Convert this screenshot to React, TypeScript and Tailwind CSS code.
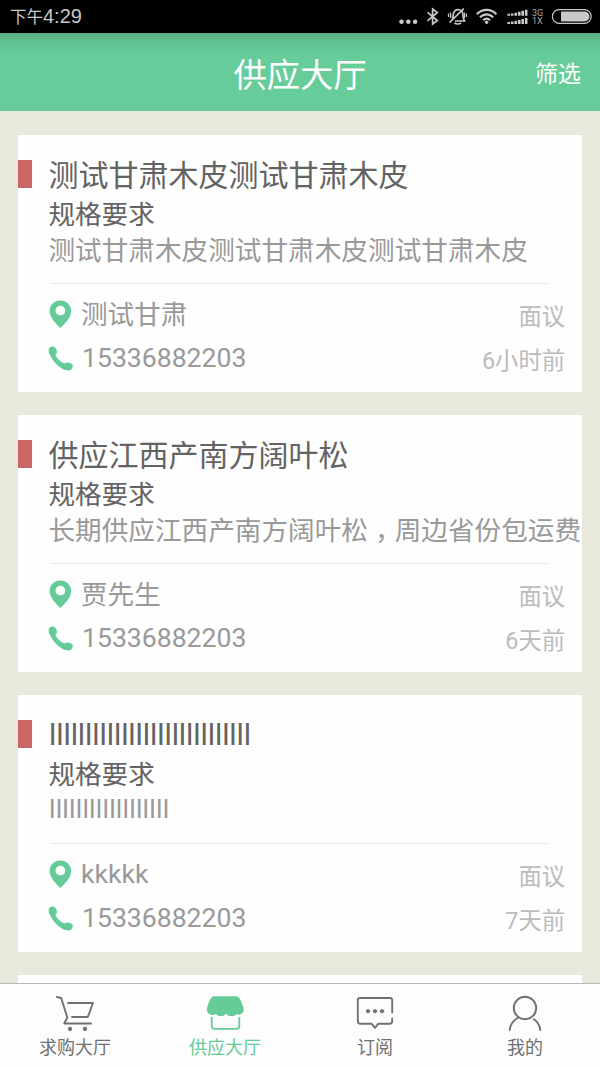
import React from "react";

type Listing = { title: string; desc: string; name: string; phone: string; time: string };

const listings: Listing[] = [
  { title: "测试甘肃木皮测试甘肃木皮", desc: "测试甘肃木皮测试甘肃木皮测试甘肃木皮", name: "测试甘肃", phone: "15336882203", time: "6小时前" },
  { title: "供应江西产南方阔叶松", desc: "长期供应江西产南方阔叶松，周边省份包运费", name: "贾先生", phone: "15336882203", time: "6天前" },
  { title: "llllllllllllllllllllllllllll", desc: "llllllllllllllllll", name: "kkkkk", phone: "15336882203", time: "7天前" },
];

const isLatin = (text: string) => /^[\x20-\x7e]+$/.test(text);

function StatusBar() {
  return (
    <div className="flex h-[33px] shrink-0 items-center justify-between bg-black pl-[10px] pr-[8px] text-[#c8c8c8]">
      <span className="flex items-center leading-[33px]">
        <span className="pt-px text-[16.5px]">下午</span>
        <span className="font-['Liberation_Sans',sans-serif] text-[20px]">4:29</span>
      </span>
      <svg width="194" height="33" viewBox="398 0 194 33" fill="none" stroke="#c8c8c8">
        <g fill="#c8c8c8" stroke="none">
          <circle cx="401.5" cy="21.7" r="2.3" />
          <circle cx="408.3" cy="21.7" r="2.3" />
          <circle cx="415.1" cy="21.7" r="2.3" />
        </g>
        <path d="M427.5 12.3 L437.3 20.5 L432.6 24 V9 L437.3 12.5 L427.5 20.8" strokeWidth="1.7" />
        <path d="M452.2 20.3 C453.3 18.5 452.6 12.5 455 10.8 C457.5 8.6 461.3 9.7 462.4 12.3 C463.2 14.5 462.6 18 464.5 21 H455 M454.5 22.8 C456 24.4 459.5 24.4 461 22.8 M449.5 22.5 L463.8 8.7" strokeWidth="1.7" />
        <path d="M450.6 12.5 V18 M448.5 13.5 V17 M464.4 12.5 V18 M466.4 13.5 V17" strokeWidth="1.3" />
        <g strokeWidth="2.2">
          <path d="M476.8 14.2 C482.3 8.4 491 8.4 496.4 14.2" />
          <path d="M480 17.3 C483.8 13.5 489.4 13.5 493.2 17.3" />
          <path d="M483.2 20.2 C485.3 18.2 488 18.2 490 20.2" />
        </g>
        <circle cx="486.6" cy="22.3" r="1.7" fill="#c8c8c8" stroke="none" />
        <g strokeWidth="2.6">
          <path d="M508.7 13.8 v2 M512.2 13.4 v2.4 M515.7 12.7 v3.1 M519.2 11.8 v4 M522.7 10.8 v5 M526.2 9.7 v6.1" />
          <path d="M508.7 22 v2 M512.2 21.5 v2.5 M515.7 20.8 v3.2 M519.2 20 v4 M522.7 19 v5 M526.2 17.9 v6.1" />
        </g>
        <g fill="#a8a8a8" stroke="none" fontFamily="Roboto, sans-serif" fontSize="9">
          <text x="532" y="15.8">3G</text>
          <text x="532" y="24.2">1X</text>
        </g>
        <rect x="552.4" y="9.7" width="38.8" height="13.6" rx="6.8" strokeWidth="1.2" />
        <path d="M561 11.5 h23.5 a5 5 0 0 1 0 10 h-23.5z" fill="#c8c8c8" stroke="none" />
      </svg>
    </div>
  );
}

function PinIcon() {
  return (
    <svg className="mb-0.5 ml-[-1px] shrink-0" width="24" height="28" viewBox="0 0 24 28">
      <path fillRule="evenodd" fill="#65cb97" d="M12.4 0.5 C6.2 0.5 1.7 5 1.7 11 C1.7 17.5 6.9 22.5 12.4 28 C17.9 22.5 23.1 17.5 23.1 11 C23.1 5 18.6 0.5 12.4 0.5Z M12.4 5.7 a4.9 4.9 0 1 1 0 9.8 a4.9 4.9 0 1 1 0-9.8Z" />
    </svg>
  );
}

function PhoneIcon() {
  return (
    <svg className="ml-[-1px] shrink-0" width="25" height="25" viewBox="0 0 25 25">
      <path fill="#65cb97" d="M1 2.5 C2.2 0.4 5.3 0 6.7 1.2 C8 2.5 9.3 4.7 9 6.5 C8.8 7.6 7.4 8.1 7.6 9 C8.4 12 12.5 15.7 16 17.1 C17.2 17.5 17.5 16.5 19 16.4 C21 16.2 24 17.5 24.7 18.9 C25.3 20.6 24 23.5 21.9 24.2 C18 25.3 12.5 22.2 8.5 18.2 C4.5 14.2 -0.8 6.2 1 2.5Z" />
    </svg>
  );
}

function Description({ text }: { text: string }) {
  const parts = text.split("，");
  return (
    <p className={`h-9 text-[26.6px] leading-8 text-[#999999] ${isLatin(text) ? "pl-[0.6px] pt-[2px] tracking-[0.22px]" : "pt-1 tracking-[0.04px]"}`}>
      {parts.map((part, i) => (
        <React.Fragment key={part}>
          {i > 0 && <span className="ml-[7px] mr-[6.3px] [font-feature-settings:'halt']">，</span>}
          {part}
        </React.Fragment>
      ))}
    </p>
  );
}

function Card({ item }: { item: Listing }) {
  return (
    <article className="h-[257px] shrink-0 overflow-hidden whitespace-nowrap bg-[#fefefe] pt-[22px]">
      <div className="flex h-9 items-start">
        <div className="mt-[3px] h-7 w-[14px] bg-[#cc6666]" />
        <h2 className={`text-[30px] leading-9 text-[#636363] ${isLatin(item.title) ? "pl-[17px] tracking-[-0.08px]" : "pl-[16.4px] pt-px"}`}>{item.title}</h2>
      </div>
      <div className="pl-[30.4px]">
        <p className="pt-[6px] text-[26.6px] leading-8 text-[#636363]">规格要求</p>
        <Description text={item.desc} />
      </div>
      <div className="ml-[33px] mr-[34px] mt-[16px] h-px bg-[#e8e8e8]" />
      <div className="flex h-[44px] items-center justify-between pl-[31px] pr-[17px] pt-[17px]">
        <div className="flex items-center gap-[9px] text-[26.6px] leading-8 text-[#999999]">
          <PinIcon />
          <span className={isLatin(item.name) ? "pb-[2px]" : ""}>{item.name}</span>
        </div>
        <span className="pt-[5px] text-[23.3px] leading-8 text-[#bbbbbb]">面议</span>
      </div>
      <div className="flex h-[44px] items-center justify-between pl-[31px] pr-[17px] pt-[17px]">
        <div className="flex items-center gap-[9px] text-[26.6px] leading-8 text-[#999999]">
          <PhoneIcon />
          <span className="pb-[2px]">{item.phone}</span>
        </div>
        <span className="pt-[5px] text-[23.3px] leading-8 text-[#bbbbbb]">{item.time}</span>
      </div>
    </article>
  );
}

const tabs = [
  {
    label: "求购大厅",
    color: "text-[#707070]",
    icon: (
      <g strokeWidth="1.9" strokeLinecap="round" strokeLinejoin="round">
        <path d="M1.8 2 L6.2 3 L12.3 22.5 L9.2 28.5 H36 M13 8 H38 L32.8 22 H17" />
        <circle cx="15" cy="34" r="1.2" fill="currentColor" />
        <circle cx="30" cy="34" r="1.2" fill="currentColor" />
      </g>
    ),
  },
  {
    label: "供应大厅",
    color: "text-[#65cb97]",
    icon: (
      <g>
        <path fill="currentColor" stroke="none" d="M8 1.3 H32 C34 1.3 38.7 10.5 38.7 14.5 C38.7 18.5 35 21 31.5 19 C29 22 24 22 21 18.7 C18 22 14 22 11 19 C7 21.5 2 19 2 14.5 C2 10.5 6.2 1.3 8 1.3Z" />
        <path strokeWidth="1.8" d="M6.7 22 V31 Q6.7 33.9 9.5 33.9 H31.5 Q34.3 33.9 34.3 31 V22" />
      </g>
    ),
  },
  {
    label: "订阅",
    color: "text-[#707070]",
    icon: (
      <g strokeWidth="1.9" strokeLinecap="round" strokeLinejoin="round">
        <path d="M37.2 17.5 V5.2 Q37.2 3 35 3 H5 Q2.8 3 2.8 5.2 V26 Q2.8 28.8 5.5 28.8 H16.8 L20 32.8 L23.2 28.8 H34.5 Q37.2 28.8 37.2 26 V23.5" />
        <g fill="currentColor" strokeWidth="0.8">
          <circle cx="13" cy="16.2" r="1.7" />
          <circle cx="20" cy="16.2" r="1.7" />
          <circle cx="27" cy="16.2" r="1.7" />
        </g>
      </g>
    ),
  },
  {
    label: "我的",
    color: "text-[#707070]",
    icon: (
      <g strokeWidth="1.9" strokeLinecap="round">
        <circle cx="20" cy="13" r="11.2" />
        <path d="M4.7 35 C5.4 29 8.7 24.8 13.5 22.5 M29 24.3 C32.5 26.8 34.8 30.5 35.2 35" />
      </g>
    ),
  },
];

export default function App() {
  return (
    <div className="flex h-[1067px] w-[600px] flex-col overflow-hidden bg-[#e8e8dd] font-['Roboto','Noto_Sans_CJK_SC',sans-serif]">
      <StatusBar />
      <header className="grid h-[78px] shrink-0 grid-cols-3 items-center bg-[#66cc99] bg-[linear-gradient(to_bottom,#58ad83,#60bd8e_7px,#66cc99_18px)] text-white">
        <span />
        <h1 className="pt-[8px] text-center text-[33.3px] leading-10">供应大厅</h1>
        <span className="pr-[19px] pt-[5px] text-right text-[23px] leading-8">筛选</span>
      </header>
      <main className="flex min-h-0 flex-1 flex-col gap-[23px] overflow-hidden px-[18px] pt-6">
        {listings.map((item) => (
          <Card key={item.title} item={item} />
        ))}
        <div className="h-20 shrink-0 bg-white" />
      </main>
      <nav className="grid h-[84px] shrink-0 grid-cols-4 border-t border-[#b8b8b8] bg-[#fdfdfd]">
        {tabs.map((tab) => (
          <div key={tab.label} className={`flex flex-col items-center pt-[11px] ${tab.color}`}>
            <svg width="40" height="38" viewBox="0 0 40 38" fill="none" stroke="currentColor">{tab.icon}</svg>
            <span className="pt-[2px] text-[18px] leading-[26px]">{tab.label}</span>
          </div>
        ))}
      </nav>
    </div>
  );
}
